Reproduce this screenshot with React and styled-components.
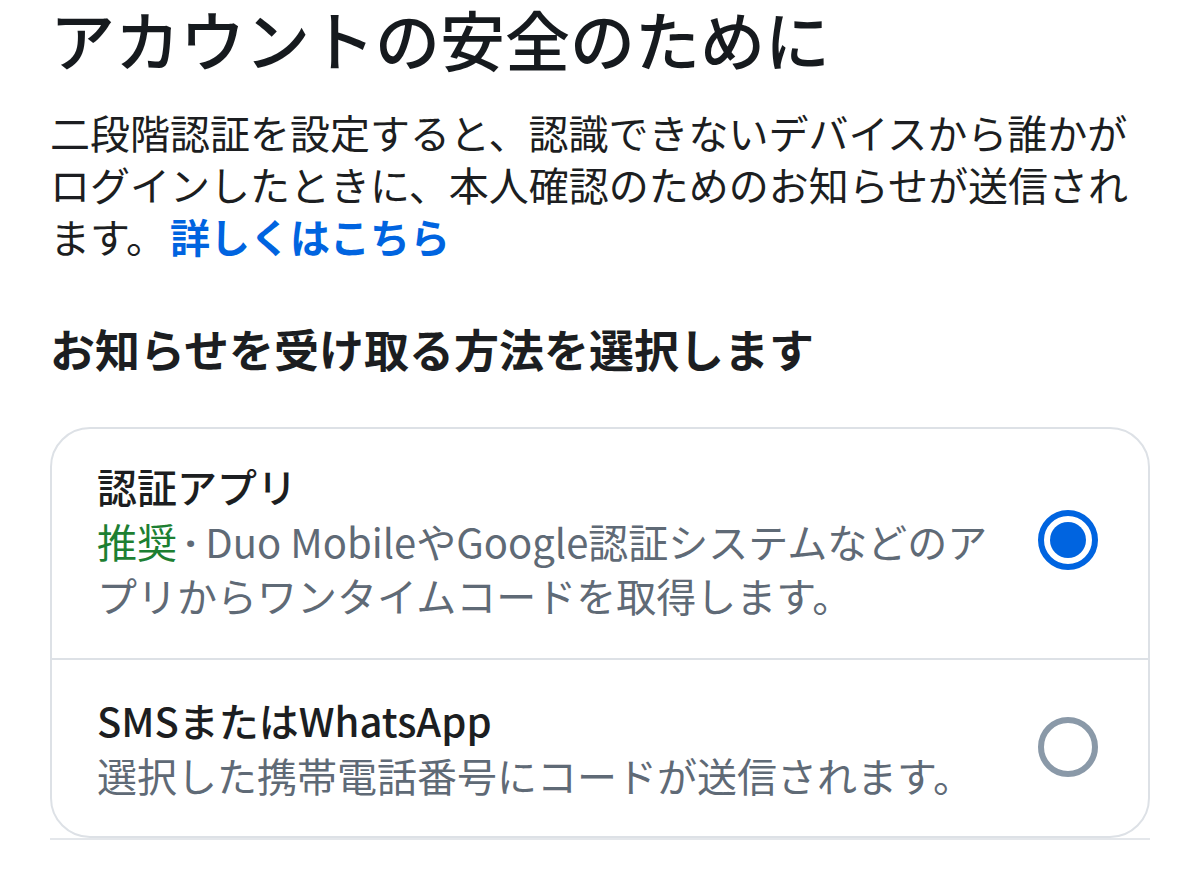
import React from 'react';
import styled, { createGlobalStyle } from 'styled-components';

const GlobalStyle = createGlobalStyle`
  html, body {
    margin: 0;
    padding: 0;
    background: #fff;
  }
  body {
    font-family: "Noto Sans CJK JP", "Noto Sans", sans-serif;
    color: #1c1e21;
  }
`;

const Page = styled.div`
  padding: 0 50px;
  width: 1100px;
`;

const Title = styled.h1`
  margin: 0;
  font-size: 65px;
  line-height: 76px;
  font-weight: 500;
  color: #161a1e;
  white-space: nowrap;
`;

const Intro = styled.p`
  margin: 30px 0 0;
  font-size: 40px;
  line-height: 52px;
  font-weight: 400;
  color: #1c1e21;
  white-space: nowrap;
`;

const Link = styled.a`
  color: #0064e0;
  font-weight: 700;
  text-decoration: none;
  margin-left: 4px;
`;

const SectionTitle = styled.h2`
  margin: 57px 0 0;
  font-size: 45px;
  line-height: 60px;
  font-weight: 700;
  color: #1c1e21;
  white-space: nowrap;
`;

const Card = styled.div`
  margin-top: 48px;
  border: 2px solid #dde1e6;
  border-radius: 40px;
  overflow: hidden;
`;

const Option = styled.label`
  display: flex;
  align-items: center;
  gap: 30px;
  padding: ${p => (p.$first ? '28px 50px 36px 45px' : '31px 50px 34px 45px')};
  border-top: ${p => (p.$first ? 'none' : '2px solid #dde1e6')};
  cursor: pointer;
`;

const OptionText = styled.div`
  flex: 1;
  min-width: 0;
`;

const OptionTitle = styled.div`
  font-size: 40px;
  line-height: 58px;
  font-weight: 500;
  color: #1c1e21;
  white-space: nowrap;
`;

const OptionDesc = styled.div`
  font-size: 40px;
  line-height: 53px;
  font-weight: 400;
  color: #5f6a76;
  white-space: nowrap;
`;

const Recommended = styled.span`
  color: #1d7f32;
`;

const Dot = styled.span`
  font-family: "Noto Sans", sans-serif;
  font-weight: 700;
  margin: 0 9px 0 8px;
`;

const Radio = styled.span`
  flex: none;
  box-sizing: border-box;
  width: 60px;
  height: 60px;
  border-radius: 50%;
  border: 6px solid ${p => (p.$checked ? '#0064e0' : '#8a99a8')};
  display: flex;
  align-items: center;
  justify-content: center;

  &::after {
    content: '';
    display: ${p => (p.$checked ? 'block' : 'none')};
    width: 36px;
    height: 36px;
    border-radius: 50%;
    background: #0064e0;
  }
`;

const BottomRule = styled.div`
  height: 2px;
  background: #e4e7eb;
`;

export default function App() {
  return (
    <>
      <GlobalStyle />
      <Page>
        <Title>アカウントの安全のために</Title>
        <Intro>
          二段階認証を設定すると、認識できないデバイスから誰かが
          <br />
          ログインしたときに、本人確認のためのお知らせが送信され
          <br />
          ます。<Link href="#">詳しくはこちら</Link>
        </Intro>
        <SectionTitle>お知らせを受け取る方法を選択します</SectionTitle>
        <Card>
          <Option $first>
            <OptionText>
              <OptionTitle>認証アプリ</OptionTitle>
              <OptionDesc>
                <Recommended>推奨</Recommended>
                <Dot>·</Dot>Duo MobileやGoogle認証システムなどのア
                <br />
                プリからワンタイムコードを取得します。
              </OptionDesc>
            </OptionText>
            <Radio $checked />
          </Option>
          <Option>
            <OptionText>
              <OptionTitle>SMSまたはWhatsApp</OptionTitle>
              <OptionDesc>選択した携帯電話番号にコードが送信されます。</OptionDesc>
            </OptionText>
            <Radio />
          </Option>
        </Card>
        <BottomRule />
      </Page>
    </>
  );
}
